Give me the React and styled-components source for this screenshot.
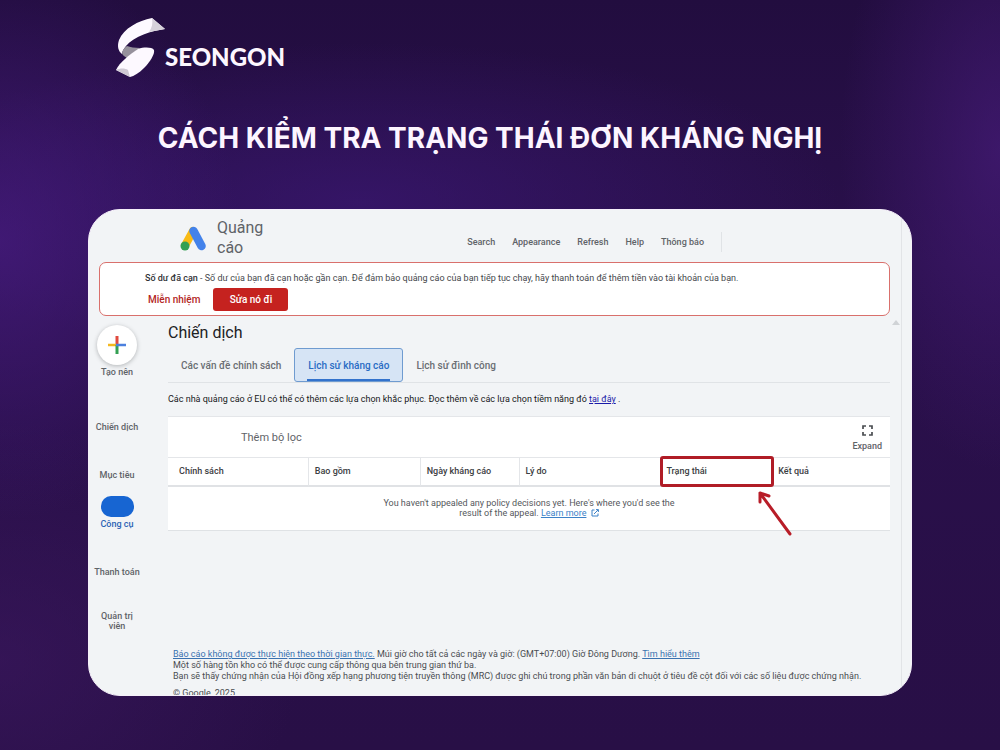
import React from "react";
import styled, { createGlobalStyle, css } from "styled-components";

const Global = createGlobalStyle`
  *, *::before, *::after { box-sizing: border-box; }
  body {
    margin: 0;
    background: #24103f;
    font-family: Roboto, "Liberation Sans", sans-serif;
    color: #3c4043;
  }
  button { font: inherit; border: 0; background: none; padding: 0; cursor: pointer; }
`;

const Poster = styled.div`
  min-height: 100vh;
  padding: 18px 88px 54px;
  background:
    radial-gradient(ellipse 240px 280px at 0% 32%, rgba(72, 28, 130, 0.7), transparent),
    radial-gradient(ellipse 160px 320px at 100% 20%, rgba(72, 28, 124, 0.65), transparent),
    radial-gradient(ellipse 480px 160px at 36% 27%, rgba(60, 24, 118, 0.65), transparent),
    radial-gradient(ellipse 300px 240px at 0% 88%, rgba(60, 24, 96, 0.6), transparent),
    linear-gradient(180deg, #220d3f 0%, #2a104c 35%, #280f46 100%);
`;

const Brand = styled.a`
  display: inline-flex;
  align-items: flex-start;
  margin-left: 28px;
  color: #fdf7ff;
  text-decoration: none;
  font: 900 24px/26px Lato, sans-serif;
  svg { display: block; }
  span { padding-top: 26px; }
`;

const Title = styled.h1`
  margin: 39px 0 54px;
  text-align: center;
  color: #fdf5ff;
  font: 700 28px/34px Inter, sans-serif;
  padding-right: 20px;
`;

const Card = styled.main`
  border-radius: 32px;
  overflow: hidden;
  background: #f2f4f6;
  border: 1px solid #f6f0fa;
  padding-right: 9px;
`;

const Frame = styled.div`
  border-right: 1px solid #e2e4e7;
`;

const TopBar = styled.header`
  display: flex;
  align-items: center;
  height: 52px;
  padding: 4px 179px 0 91px;
`;

const Product = styled.a`
  display: flex;
  align-items: center;
  gap: 10px;
  width: 108px;
  color: #5f6368;
  text-decoration: none;
  font-size: 16px;
  line-height: 20px;
  svg { flex: none; }
  span { width: 50px; }
`;

const TopNav = styled.nav`
  display: flex;
  align-items: center;
  gap: 17px;
  height: 20px;
  margin: 8px 0 0 auto;
  padding-right: 17px;
  border-right: 1px solid #e0e3e6;
`;

const TopLink = styled.button`
  font-size: 9px;
  line-height: 12px;
  font-weight: 500;
  color: #5f6368;
  white-space: nowrap;
`;

const Alert = styled.section`
  margin: 0 11px 0 10px;
  padding: 9px 45px 4px;
  border: 1px solid #d9706c;
  border-radius: 7px;
  background: #fff;
  font-size: 9px;
  line-height: 12px;
  p { margin: 0 0 4px; color: #45484c; }
  b { font-weight: 500; color: #303236; }
`;

const Actions = styled.div`
  display: flex;
  align-items: center;
  gap: 13px;
  padding-left: 3px;
`;

const ActionButton = styled.button`
  height: 23px;
  font-size: 10px;
  font-weight: 500;
  color: #b3261e;
  border-radius: 3px;
  ${(p) => p.$filled && css`
    width: 75px;
    background: #c5221f;
    color: #fff;
  `}
`;

const Body = styled.div`
  display: flex;
  align-items: flex-start;
`;

const Side = styled.nav`
  display: flex;
  flex-direction: column;
  align-items: center;
  flex: none;
  width: 56px;
  padding-top: 9px;
`;

const SideItem = styled.button`
  display: flex;
  flex-direction: column;
  align-items: center;
  gap: 2px;
  width: 56px;
  margin-bottom: ${(p) => p.$space || 0}px;
  font-size: 9px;
  line-height: 10px;
  font-weight: 500;
  color: ${(p) => (p.$active ? "#2a62b4" : "#5f6368")};
`;

const Fab = styled.span`
  display: grid;
  place-items: center;
  width: 40px;
  height: 40px;
  border-radius: 50%;
  background: #fff;
  box-shadow: 0 1px 4px rgba(60, 64, 67, 0.35);
`;

const Pill = styled.span`
  width: 33px;
  height: 21px;
  border-radius: 10px;
  background: #1765d2;
`;

const Content = styled.div`
  position: relative;
  flex: 1;
  min-width: 0;
  padding: 7px 11px 0 23px;
`;

const ScrollCaret = styled.i`
  position: absolute;
  top: 4px;
  right: 1px;
  border: 4px solid transparent;
  border-top: 0;
  border-bottom: 5px solid #d0d3d6;
`;

const Heading = styled.h2`
  margin: 0 0 6px;
  font-size: 16px;
  line-height: 19px;
  font-weight: 400;
  color: #202124;
`;

const Tabs = styled.div`
  display: flex;
  border-bottom: 1px solid #e0e3e6;
`;

const Tab = styled.button`
  position: relative;
  height: 34px;
  padding: 0 13px;
  font-size: 10px;
  font-weight: 500;
  color: #6a6e73;
  white-space: nowrap;
  ${(p) => p.$active && css`
    border: 1px solid #6f9bd0;
    border-radius: 3px;
    background: #d6e4f5;
    color: #2a6cc4;
    &::after {
      content: "";
      position: absolute;
      left: 12px;
      right: 12px;
      bottom: 0;
      height: 2px;
      background: #3272cc;
    }
  `}
`;

const Note = styled.p`
  margin: 10px 0;
  font-size: 9px;
  line-height: 13px;
  color: #17181a;
  a { color: #1a1aa8; }
`;

const Panel = styled.section`
  background: #fff;
  border-top: 1px solid #e4e6e9;
  border-bottom: 1px solid #dfe2e5;
`;

const Toolbar = styled.div`
  display: flex;
  align-items: center;
  justify-content: space-between;
  height: 40px;
  padding: 0 8px 0 73px;
`;

const FilterButton = styled.button`
  font-size: 11px;
  color: #5f6368;
`;

const ExpandButton = styled.button`
  display: flex;
  flex-direction: column;
  align-items: center;
  gap: 5px;
  padding-top: 2px;
  font-size: 9px;
  line-height: 10px;
  font-weight: 500;
  color: #5f6368;
`;

const Table = styled.table`
  width: 100%;
  border-collapse: separate;
  border-spacing: 0;
  table-layout: fixed;
`;

const Th = styled.th`
  position: relative;
  z-index: ${(p) => (p.$marked ? 1 : 0)};
  width: ${(p) => p.$w};
  height: 30px;
  padding: 0 6px 1px;
  text-align: left;
  font-size: 9px;
  font-weight: 500;
  color: #3c4043;
  border-top: 1px solid #e4e6e9;
  border-bottom: 2px solid #e0e2e5;
  border-right: ${(p) => (p.$divided ? "1px solid #e4e6e9" : "0")};
  &:first-child { padding-left: 11px; }
`;

const Highlight = styled.span`
  position: absolute;
  inset: -2px -2px -2px 0;
  border: 3px solid #b01c26;
  border-radius: 3px;
`;

const Arrow = styled.svg`
  position: absolute;
  right: -20px;
  top: 32px;
`;

const Empty = styled.td`
  height: 43px;
  padding: 0 0 1px;
  text-align: center;
  font-size: 9px;
  line-height: 10px;
  color: #55585c;
  a { color: #3c82c8; }
  svg { margin-left: 2px; vertical-align: -1px; }
`;

const Footer = styled.footer`
  padding: 118px 0 0 5px;
  font-size: 9px;
  line-height: 11px;
  color: #4a4d51;
  p { margin: 0; }
  a { color: #3a72b0; }
`;

const Copyright = styled.p`
  && { margin-top: 6px; height: 7px; }
`;

const SeongonMark = () => (
  <svg width="49" height="60" viewBox="0 0 49 60" aria-hidden="true">
    <path d="M36 0L49 11C36 13 18 18 10 28C8 31 6 33 6 36C2 33 1 28 3 22C8 10 22 3 36 0Z" fill="#fdf9ff" />
    <path d="M36 0L49 11C43 12 38 13 33 14C36 10 37 5 36 0Z" fill="#d6d1da" />
    <path d="M6 35C7 31 9 29 11 28C14 29 19 30 24 30L11 40C8 38 6 37 6 35Z" fill="#96919c" />
    <path d="M22 31C28 29 36 29 38 32C39 36 34 44 28 50C23 55 18 58 14 59L0 52C4 44 12 38 22 31Z" fill="#fdf9ff" />
    <path d="M0 52C4 50 9 50 12 52L14 59Z" fill="#cfc9d4" />
  </svg>
);

const AdsMark = () => (
  <svg width="27" height="25" viewBox="0 0 27 25" aria-hidden="true">
    <path d="M13 5L5 19.500" stroke="#f9bb15" strokeWidth="8" strokeLinecap="round" />
    <path d="M13.500 5l8 15" stroke="#4382ea" strokeWidth="8.500" strokeLinecap="round" />
    <circle cx="5" cy="20" r="4.500" fill="#34a053" />
  </svg>
);

const PlusMark = () => (
  <svg width="18" height="18" viewBox="0 0 18 18" aria-hidden="true">
    <path d="M9 0v9" stroke="#e04a3f" strokeWidth="3" />
    <path d="M0 9h8" stroke="#f4b820" strokeWidth="2.500" />
    <path d="M9 18V9" stroke="#34a053" strokeWidth="3" />
    <path d="M8 9h10" stroke="#4c80de" strokeWidth="2.500" />
  </svg>
);

const ExpandMark = () => (
  <svg width="11" height="11" viewBox="0 0 11 11" fill="none" stroke="#4a4d51" strokeWidth="1.700" aria-hidden="true">
    <path d="M1 4V1h3M7 1h3v3M10 7v3H7M4 10H1V7" />
  </svg>
);

const ExternalMark = () => (
  <svg width="8" height="8" viewBox="0 0 8 8" fill="none" stroke="#3c82c8" aria-hidden="true">
    <path d="M3.500 1H1v6h6V4.500M5 .6h2.400V3M7.200.8L3 5" />
  </svg>
);

const NAV = ["Search", "Appearance", "Refresh", "Help", "Thông báo"];

const COLUMNS = [
  { label: "Chính sách", w: "19.5%", divided: true },
  { label: "Bao gồm", w: "15.5%", divided: true },
  { label: "Ngày kháng cáo", w: "13.7%", divided: true },
  { label: "Lý do", w: "19.5%" },
  { label: "Trạng thái", w: "15.5%", marked: true },
  { label: "Kết quả", w: "16.3%" },
];

export default function App() {
  return (
    <Poster>
      <Global />
      <Brand href="#">
        <SeongonMark />
        <span>SEONGON</span>
      </Brand>
      <Title>CÁCH KIỂM TRA TRẠNG THÁI ĐƠN KHÁNG NGHỊ</Title>
      <Card>
        <Frame>
          <TopBar>
            <Product href="#">
              <AdsMark />
              <span>Quảng cáo</span>
            </Product>
            <TopNav>
              {NAV.map((label) => (
                <TopLink key={label}>{label}</TopLink>
              ))}
            </TopNav>
          </TopBar>
          <Alert>
            <p>
              <b>Số dư đã cạn</b> - Số dư của bạn đã cạn hoặc gần cạn. Để đảm bảo quảng cáo của bạn
              tiếp tục chạy, hãy thanh toán để thêm tiền vào tài khoản của bạn.
            </p>
            <Actions>
              <ActionButton>Miễn nhiệm</ActionButton>
              <ActionButton $filled>Sửa nó đi</ActionButton>
            </Actions>
          </Alert>
          <Body>
            <Side>
              <SideItem $space={45}>
                <Fab><PlusMark /></Fab>
                Tạo nên
              </SideItem>
              <SideItem $space={38}>Chiến dịch</SideItem>
              <SideItem $space={16}>Mục tiêu</SideItem>
              <SideItem $space={38} $active>
                <Pill />
                Công cụ
              </SideItem>
              <SideItem $space={34}>Thanh toán</SideItem>
              <SideItem>
                <span>Quản trị<br />viên</span>
              </SideItem>
            </Side>
            <Content>
              <ScrollCaret />
              <Heading>Chiến dịch</Heading>
              <Tabs role="tablist">
                <Tab role="tab">Các vấn đề chính sách</Tab>
                <Tab role="tab" aria-selected="true" $active>Lịch sử kháng cáo</Tab>
                <Tab role="tab">Lịch sử đình công</Tab>
              </Tabs>
              <Note>
                Các nhà quảng cáo ở EU có thể có thêm các lựa chọn khắc phục. Đọc thêm về các lựa
                chọn tiềm năng đó <a href="#">tại đây</a> .
              </Note>
              <Panel>
                <Toolbar>
                  <FilterButton>Thêm bộ lọc</FilterButton>
                  <ExpandButton>
                    <ExpandMark />
                    Expand
                  </ExpandButton>
                </Toolbar>
                <Table>
                  <thead>
                    <tr>
                      {COLUMNS.map((c) => (
                        <Th key={c.label} $w={c.w} $divided={c.divided} $marked={c.marked}>
                          {c.label}
                          {c.marked && (
                            <>
                              <Highlight />
                              <Arrow width="36" height="46" viewBox="0 0 36 46" fill="none" stroke="#b81d28" strokeWidth="3" strokeLinecap="round" strokeLinejoin="round" aria-hidden="true">
                                <path d="M4 3l30 41M4 12V3l9 3" />
                              </Arrow>
                            </>
                          )}
                        </Th>
                      ))}
                    </tr>
                  </thead>
                  <tbody>
                    <tr>
                      <Empty colSpan={6}>
                        You haven't appealed any policy decisions yet. Here's where you'd see the
                        <br />
                        result of the appeal. <a href="#">Learn more</a> <ExternalMark />
                      </Empty>
                    </tr>
                  </tbody>
                </Table>
              </Panel>
              <Footer>
                <p>
                  <a href="#">Báo cáo không được thực hiện theo thời gian thực.</a> Múi giờ cho tất
                  cả các ngày và giờ: (GMT+07:00) Giờ Đông Dương. <a href="#">Tìm hiểu thêm</a>
                </p>
                <p>Một số hàng tồn kho có thể được cung cấp thông qua bên trung gian thứ ba.</p>
                <p>
                  Bạn sẽ thấy chứng nhận của Hội đồng xếp hạng phương tiện truyền thông (MRC) được
                  ghi chú trong phần văn bản di chuột ở tiêu đề cột đối với các số liệu được chứng nhận.
                </p>
                <Copyright>© Google, 2025.</Copyright>
              </Footer>
            </Content>
          </Body>
        </Frame>
      </Card>
    </Poster>
  );
}
